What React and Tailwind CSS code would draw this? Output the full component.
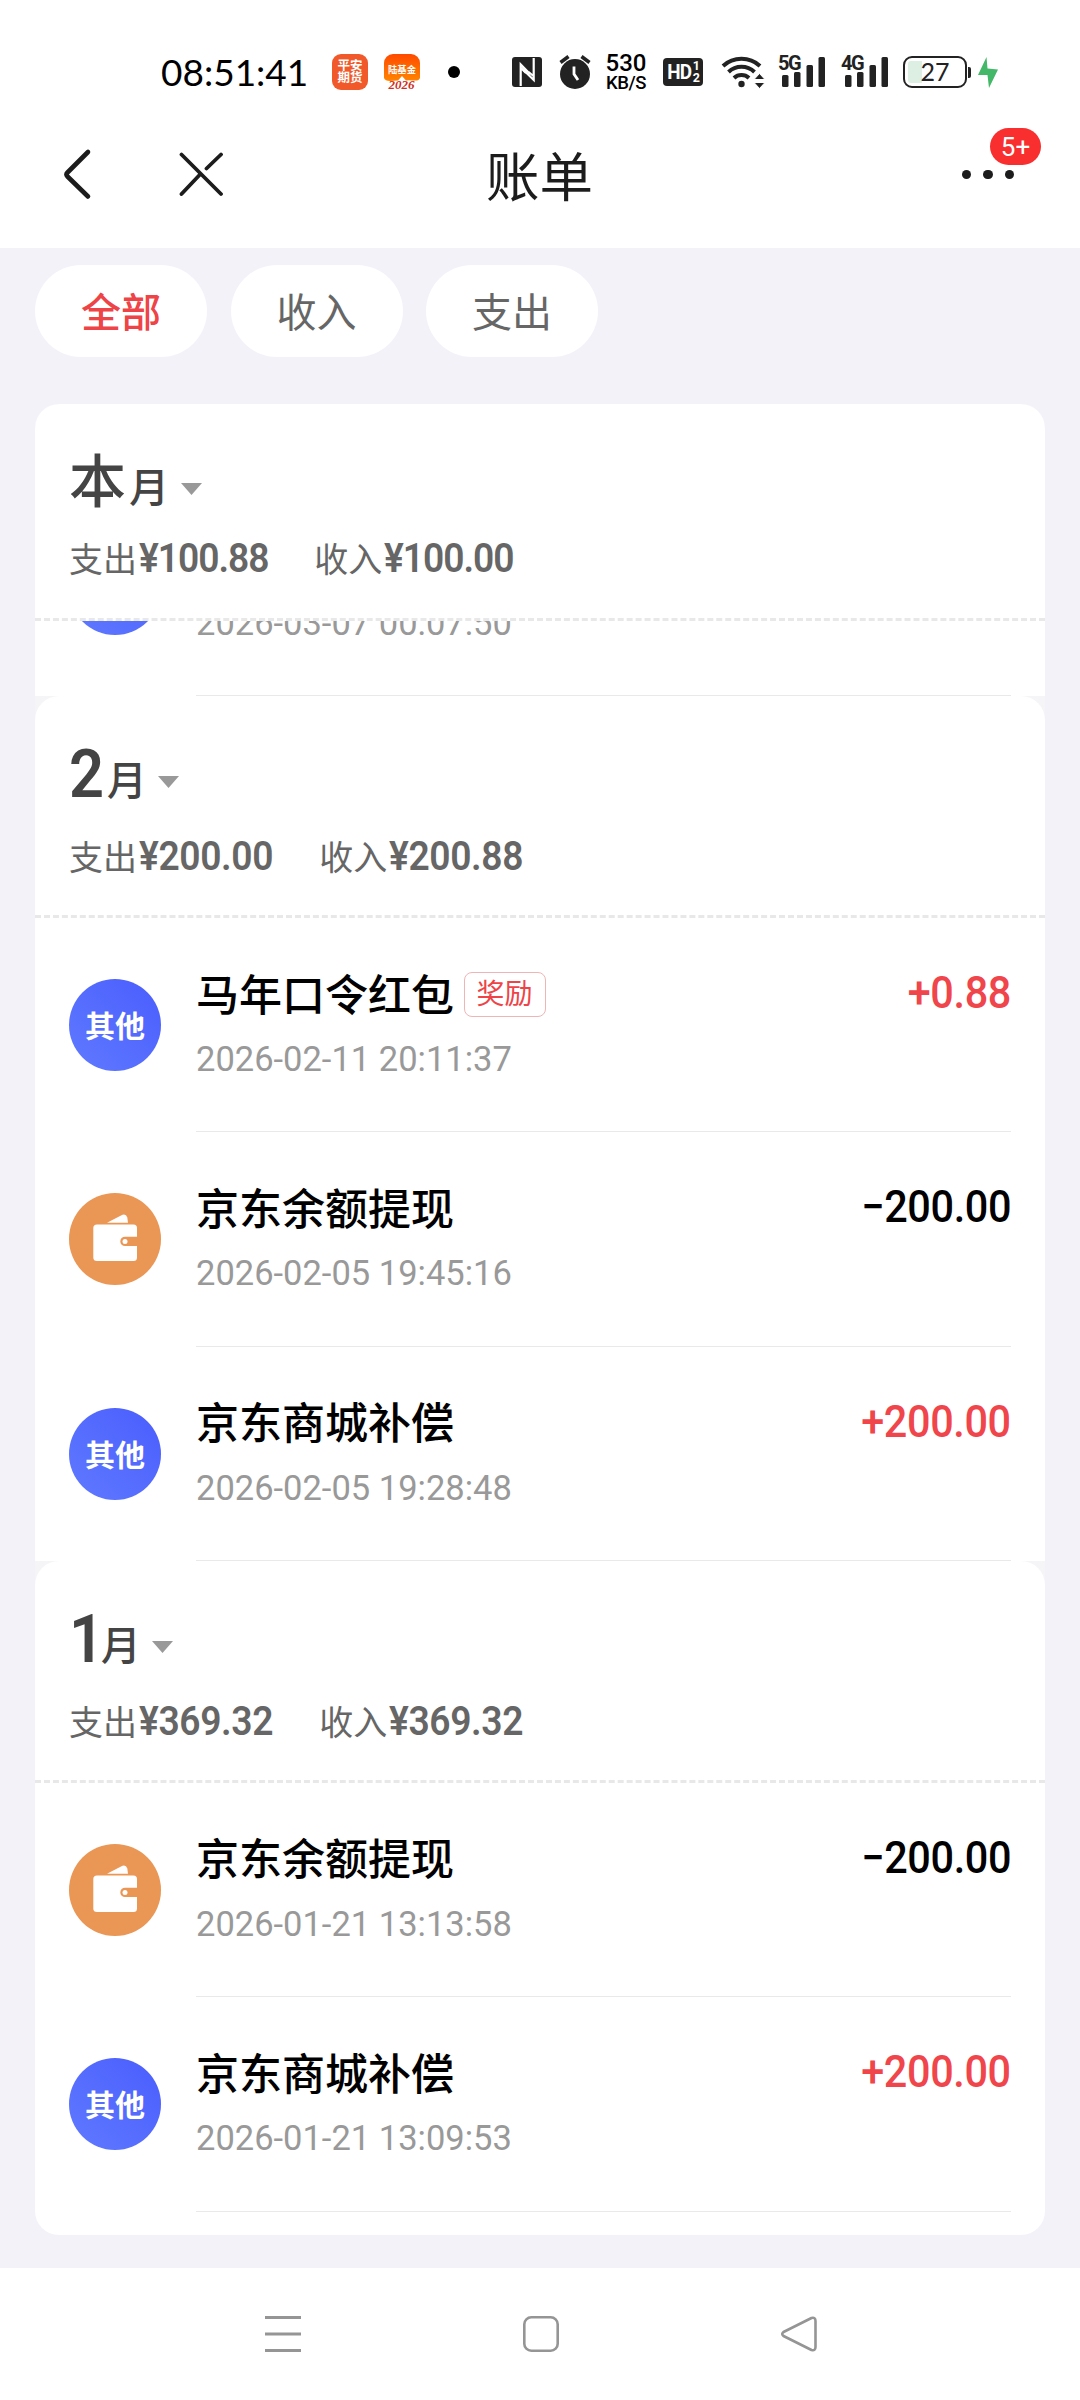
import clsx from 'clsx';

const months = [
  {
    id: '03',
    name: '本',
    out: '¥100.88',
    income: '¥100.00',
    sticky: true,
    rows: [{ type: 'plain', time: '2026-03-07 00:07:50' }],
  },
  {
    id: '02',
    name: '2',
    out: '¥200.00',
    income: '¥200.88',
    rows: [
      { type: 'other', title: '马年口令红包', tag: '奖励', time: '2026-02-11 20:11:37', amount: '+0.88' },
      { type: 'wallet', title: '京东余额提现', time: '2026-02-05 19:45:16', amount: '−200.00' },
      { type: 'other', title: '京东商城补偿', time: '2026-02-05 19:28:48', amount: '+200.00' },
    ],
  },
  {
    id: '01',
    name: '1',
    out: '¥369.32',
    income: '¥369.32',
    rows: [
      { type: 'wallet', title: '京东余额提现', time: '2026-01-21 13:13:58', amount: '−200.00' },
      { type: 'other', title: '京东商城补偿', time: '2026-01-21 13:09:53', amount: '+200.00' },
    ],
  },
];

const tabs = ['全部', '收入', '支出'];

function Signal({ label }) {
  return (
    <div className="relative w-[47px] h-[34px]">
      <svg width="47" height="34" viewBox="0 0 47 34" fill="#222">
        <rect x="4" y="20" width="6.5" height="12" rx="1.5" />
        <rect x="16" y="17" width="6.5" height="15" rx="1.5" />
        <rect x="28.5" y="10" width="6.5" height="22" rx="1.5" />
        <rect x="40.5" y="2" width="6.5" height="30" rx="1.5" />
      </svg>
      <span className="absolute left-0 top-0 text-[20px] leading-[16px] font-bold tracking-[-1.5px] text-[#222]">{label}</span>
    </div>
  );
}

function StatusBar() {
  return (
    <div className="h-[100px] pt-[44px] pl-[161px] flex items-center text-[#222]">
      <span className="w-[145px] mb-[2px] font-['Lato'] text-[37px] leading-none text-black whitespace-nowrap">08:51:41</span>
      <div className="ml-[26px] w-[36px] h-[36px] rounded-[9px] bg-[#f1592a] text-white text-[12.5px] leading-[12.5px] font-bold text-center flex flex-col justify-center">
        <span>平安</span>
        <span>期货</span>
      </div>
      <svg className="ml-[16px]" width="36" height="36" viewBox="0 0 36 36">
        <defs>
          <linearGradient id="fund" x1="0" y1="0" x2="0" y2="1">
            <stop offset="0" stopColor="#ff4a00" />
            <stop offset="1" stopColor="#ff8400" />
          </linearGradient>
        </defs>
        <path d="M9 0h18a9 9 0 0 1 9 9v15q-1 3-6 2.500q-6-.5-8 0L18 22l-4 4.500q-4 0-8 .5-5 0-6-3V9a9 9 0 0 1 9-9z" fill="url(#fund)" />
        <text x="18" y="18.500" textAnchor="middle" fontSize="9.300" fontWeight="700" fill="#fff">陆基金</text>
        <text x="17.500" y="34.500" textAnchor="middle" fontSize="13" fontStyle="italic" fontWeight="700" fontFamily="Liberation Serif, serif" fill="#cf2f22">2026</text>
      </svg>
      <span className="ml-[28px] w-[12px] h-[12px] rounded-full bg-black" />

      <svg className="ml-[52px]" width="30" height="30" viewBox="0 0 30 30">
        <rect width="30" height="30" rx="3" fill="#222" />
        <path d="M8.700 29V7.500L18 17M9 11l5 5" fill="none" stroke="#fff" strokeWidth="2.200" />
        <path d="M21.700 1v22L12 13.500M21.500 19l-5-4" fill="none" stroke="#fff" strokeWidth="2.200" />
      </svg>
      <svg className="ml-[17px]" width="32" height="34" viewBox="0 0 32 34">
        <circle cx="16" cy="19" r="15" fill="#222" />
        <path d="M1.500 7.500L9.500 1.500M30.500 7.500L22.500 1.500" stroke="#222" strokeWidth="3.600" />
        <path d="M15 11.500V19l4 6" fill="none" stroke="#fff" strokeWidth="2.800" />
      </svg>
      <div className="ml-[12px] w-[46px] flex flex-col items-center text-black font-medium">
        <span className="text-[24px] leading-[21px]">530</span>
        <span className="text-[18.500px] leading-[18px] tracking-[-0.4px]">KB/S</span>
      </div>
      <div className="ml-[14px] w-[40px] h-[28px] rounded-[4px] bg-[#222] text-white flex items-center justify-center">
        <span className="text-[21px] leading-none font-bold tracking-[-1px] scale-x-90">HD</span>
        <span className="flex flex-col text-[12.500px] leading-[12px] font-bold">
          <span>1</span>
          <span>2</span>
        </span>
      </div>
      <svg className="ml-[18px]" width="44" height="34" viewBox="0 0 44 34">
        <g fill="none" stroke="#222" strokeWidth="4">
          <path d="M2 11a27.500 27.500 0 0 1 37 0" />
          <path d="M7.500 17a19 19 0 0 1 26 0" />
          <path d="M13 23a11 11 0 0 1 15 0" />
        </g>
        <circle cx="20.500" cy="29" r="3.200" fill="#222" />
        <path d="M33 24.500l5.500-6 5.500 6zM33 27.500h11l-5.500 6z" fill="#222" stroke="#fff" strokeWidth="1" />
      </svg>
      <div className="ml-[13px]"><Signal label="5G" /></div>
      <div className="ml-[16px]"><Signal label="4G" /></div>
      <div className="ml-[15px] w-[64px] h-[32px] rounded-[9px] border-[2.500px] border-[#222] p-[3px] relative">
        <div className="w-[14px] h-full rounded-l-[3px] bg-[#dcefe2]" />
        <span className="absolute inset-0 text-center text-[25px] leading-[27px] font-['Lato']">27</span>
      </div>
      <span className="ml-px w-[3px] h-[11px] rounded-r-[2px] bg-[#222]" />
      <svg className="ml-[7px]" width="20" height="31" viewBox="0 0 20 31" fill="#43b868">
        <path d="M8.500 0L0 18h9.500l1.500 13L20 12.500l-10.500-1z" />
      </svg>
    </div>
  );
}

function NavBar() {
  return (
    <header className="h-[148px] flex items-start justify-between pl-[60px] pr-[64px] pt-[45px]">
      <div className="flex w-[303px] gap-[83px] pt-px">
        <svg width="36" height="56" viewBox="0 0 36 56" fill="none" stroke="#1c1c1c" strokeWidth="4.600" strokeLinecap="round" strokeLinejoin="round">
          <path d="M28 6L7.500 26.500Q5.500 28.500 7.500 30.500L28 50.500" />
        </svg>
        <svg width="44" height="56" viewBox="0 0 44 56" fill="none" stroke="#1c1c1c" strokeWidth="3.800" strokeLinecap="round">
          <path d="M2.500 8.500L42 48M2.500 48L21 28.500M27.500 22.500L42 8.500" />
        </svg>
      </div>
      <h1 className="pt-[2px] text-[53.500px] leading-[64px] text-[#1c1c1c]">账单</h1>
      <div className="relative w-[300px] h-[59px] flex items-center justify-end gap-[12px] pr-[2px]">
        <span className="w-[9.500px] h-[9.500px] rounded-full bg-[#1c1c1c]" />
        <span className="w-[9.500px] h-[9.500px] rounded-full bg-[#1c1c1c]" />
        <span className="w-[9.500px] h-[9.500px] rounded-full bg-[#1c1c1c]" />
        <span className="absolute right-[-25px] top-[-17px] w-[51px] h-[37px] rounded-full bg-[#f92e2e] text-white text-[26px] leading-[39px] text-center">5+</span>
      </div>
    </header>
  );
}

function RowIcon({ type }) {
  if (type === 'wallet') {
    return (
      <div className="w-[92px] h-[92px] shrink-0 rounded-full bg-[#ea9654]">
        <svg width="92" height="92" viewBox="0 0 92 92" fill="#fff">
          <path d="M38 29.700L53.500 21.700Q57 20.500 58.300 24.500L59 29.700z" />
          <path d="M28 31.500H64.500Q68 31.500 68 35V43.700H56a4.700 4.700 0 0 0 0 9.400H68V64.500Q68 68 64.500 68H28Q24.300 68 24.300 64.500V35Q24.300 31.500 28 31.500z" />
          <circle cx="56" cy="48.400" r="2.500" />
        </svg>
      </div>
    );
  }
  return (
    <div className="w-[92px] h-[92px] shrink-0 rounded-full bg-linear-to-tr from-[#6079ff] to-[#4a5dfd] text-white text-[30px] leading-[95px] font-bold text-center">
      {type === 'other' && '其他'}
    </div>
  );
}

function Row({ row }) {
  return (
    <div className="h-[214.33px] shrink-0 px-[34px] flex gap-[35px]">
      <div className="pt-[61px]">
        <RowIcon type={row.type} />
      </div>
      <div className="flex-1 flex justify-between border-b border-[#e9e9e9]">
        <div className="pt-[51px]">
          <div className="flex items-center gap-[10px] h-[50px]">
            <span className="pt-[3px] text-[43px] leading-[50px] font-medium text-black">{row.title}</span>
            {row.tag && (
              <span className="w-[82px] h-[45px] pr-px rounded-[8px] border border-[#f0b4b6] text-[28px] leading-[43px] text-center text-[#ee4347]">{row.tag}</span>
            )}
          </div>
          <p className="mt-[20px] text-[34.500px] leading-[40px] text-[#999]">{row.time}</p>
        </div>
        {row.amount && (
          <span
            className={clsx(
              'pt-[50px] text-[44.500px] leading-[50px] font-medium tracking-[-0.4px] origin-right scale-x-93',
              row.amount.startsWith('+') ? 'text-[#f0454b]' : 'text-black'
            )}
          >
            {row.amount}
          </span>
        )}
      </div>
    </div>
  );
}

function Total({ label, value }) {
  return (
    <p className="flex items-baseline">
      <span>{label}</span>
      <span
        className={clsx(
          'ml-[2px] mr-[-11px] text-[40px] font-semibold origin-left scale-x-93',
          value.startsWith('¥1') ? 'tracking-[-1.1px]' : 'tracking-[-0.4px]'
        )}
      >
        {value}
      </span>
    </p>
  );
}

function MonthHeader({ month }) {
  return (
    <div className={clsx('rounded-t-[24px] bg-white border-b-[3px] border-dashed border-[#e8e8e8]', month.sticky ? 'h-[217px]' : 'h-[222px]')}>
      <div className="pt-[39px] pl-[34px] flex items-baseline h-[119px] leading-[80px] text-[#444]">
        <span
          className={clsx(
            month.sticky ? 'text-[57px] font-medium' : 'text-[66px] font-semibold origin-left scale-x-93',
            month.name === '1' ? 'tracking-[-9px]' : month.name === '2' && 'tracking-[-3px]'
          )}
        >
          {month.name}
        </span>
        <span className={clsx('relative ml-[3px] text-[40px] font-medium', month.sticky ? 'top-0' : 'top-[-2px]')}>月</span>
        <svg className={clsx('relative', month.sticky ? 'ml-[12px] top-[-7px]' : 'ml-[11px] top-[-9px]')} width="21" height="12" viewBox="0 0 21 12" fill="#999">
          <path d="M0 0h21L10.500 12z" />
        </svg>
      </div>
      <div className={clsx('pl-[34px] flex gap-[47px] leading-[40px] text-[34px] text-[#666]', month.sticky ? 'pt-[16px]' : 'pt-[22px]')}>
        <Total label="支出" value={month.out} />
        <Total label="收入" value={month.income} />
      </div>
    </div>
  );
}

export default function App() {
  return (
    <div className="w-[1080px] h-[2400px] overflow-hidden flex flex-col bg-white font-['Roboto','Noto_Sans_CJK_SC',sans-serif]">
      <StatusBar />
      <NavBar />

      <main className="h-[2020px] bg-[#f3f2f8] px-[35px] pt-[17px]">
        <div className="flex gap-[23.500px]">
          {tabs.map((tab, i) => (
            <button
              key={tab}
              className={clsx(
                'w-[172px] h-[92px] rounded-full bg-white text-[40px] leading-[92px] pt-[3px]',
                i === 0 ? 'font-medium text-[#ee4347]' : 'text-[#666]'
              )}
            >
              {tab}
            </button>
          ))}
        </div>

        <div className="mt-[47px] h-[1831px] rounded-[24px] overflow-hidden bg-white">
          {months.map((month) => (
            <section key={month.id} className={month.sticky ? '' : 'bg-[#f5f5f8]'}>
              <div className={month.sticky ? 'bg-[#f3f2f8]' : ''}>
                <MonthHeader month={month} />
              </div>
              {/* rows of the sticky month scroll away under its header */}
              <div className={clsx('bg-white flex flex-col justify-end overflow-hidden', month.sticky && 'h-[75px]')}>
                {month.rows.map((row) => (
                  <Row key={row.time} row={row} />
                ))}
              </div>
            </section>
          ))}
        </div>
      </main>

      <footer className="h-[132px] flex justify-between pt-[48px] pl-[265px] pr-[263px]">
        <svg width="36" height="36" viewBox="0 0 36 36" stroke="#959595" strokeWidth="3">
          <path d="M0 1.500h36M0 18h36M0 34.500h36" />
        </svg>
        <svg width="36" height="36" viewBox="0 0 36 36" fill="none" stroke="#959595" strokeWidth="2.600">
          <rect x="1.300" y="1.300" width="33.400" height="33.400" rx="7" />
        </svg>
        <svg width="36" height="36" viewBox="0 0 36 36" fill="none" stroke="#959595" strokeWidth="2.600" strokeLinejoin="round">
          <path d="M30.500 2L2.500 16Q0 18 2.500 20L30.500 34Q34.500 35 34.500 31V5Q34.500 1 30.500 2z" />
        </svg>
      </footer>
    </div>
  );
}
